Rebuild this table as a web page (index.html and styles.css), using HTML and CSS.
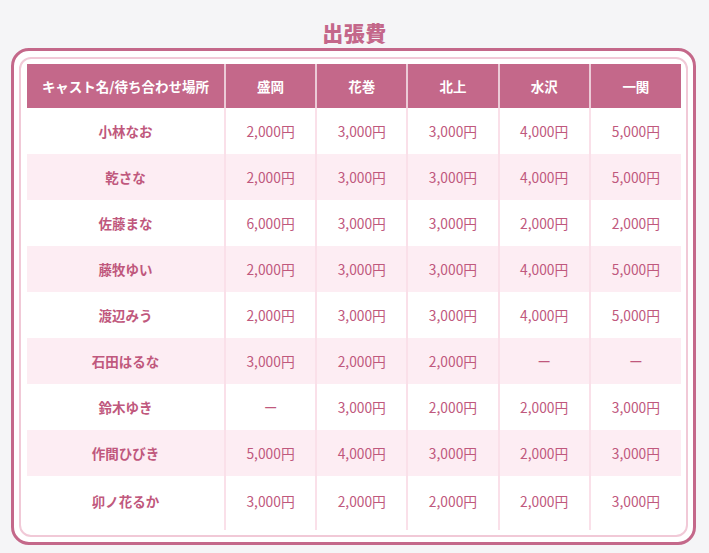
FILE: index.html
```html
<!DOCTYPE html>
<html lang="ja">
<head>
<meta charset="utf-8">
<title>出張費</title>
<link rel="stylesheet" href="styles.css">
</head>
<body>
<h1 class="title">出張費</h1>
<div class="frame">
  <div class="inner">
    <table class="fees">
      <colgroup>
        <col class="c-name"><col><col><col><col><col>
      </colgroup>
      <thead>
        <tr><th>キャスト名/待ち合わせ場所</th><th>盛岡</th><th>花巻</th><th>北上</th><th>水沢</th><th>一関</th></tr>
      </thead>
      <tbody>
        <tr><td class="name">小林なお</td><td>2,000円</td><td>3,000円</td><td>3,000円</td><td>4,000円</td><td>5,000円</td></tr>
        <tr><td class="name">乾さな</td><td>2,000円</td><td>3,000円</td><td>3,000円</td><td>4,000円</td><td>5,000円</td></tr>
        <tr><td class="name">佐藤まな</td><td>6,000円</td><td>3,000円</td><td>3,000円</td><td>2,000円</td><td>2,000円</td></tr>
        <tr><td class="name">藤牧ゆい</td><td>2,000円</td><td>3,000円</td><td>3,000円</td><td>4,000円</td><td>5,000円</td></tr>
        <tr><td class="name">渡辺みう</td><td>2,000円</td><td>3,000円</td><td>3,000円</td><td>4,000円</td><td>5,000円</td></tr>
        <tr><td class="name">石田はるな</td><td>3,000円</td><td>2,000円</td><td>2,000円</td><td>ー</td><td>ー</td></tr>
        <tr><td class="name">鈴木ゆき</td><td>ー</td><td>3,000円</td><td>2,000円</td><td>2,000円</td><td>3,000円</td></tr>
        <tr><td class="name">作間ひびき</td><td>5,000円</td><td>4,000円</td><td>3,000円</td><td>2,000円</td><td>3,000円</td></tr>
        <tr><td class="name">卯ノ花るか</td><td>3,000円</td><td>2,000円</td><td>2,000円</td><td>2,000円</td><td>3,000円</td></tr>
      </tbody>
    </table>
  </div>
</div>
</body>
</html>
```

FILE: styles.css
```css
html, body {
  margin: 0;
  padding: 0;
  background: #f5f5f7;
}
body {
  font-family: "Noto Sans CJK JP", "Noto Sans", sans-serif;
  color: #c0587d;
  width: 709px;
  height: 553px;
  overflow: hidden;
}
.title {
  margin: 0;
  padding-top: 18px;
  height: 30px;
  line-height: 28px;
  text-align: center;
  font-size: 21px;
  font-weight: 900;
  color: #c4678a;
  letter-spacing: 0.5px;
}
.frame {
  box-sizing: border-box;
  margin-left: 11px;
  width: 685px;
  height: 497px;
  border: 3px solid #c4688a;
  border-radius: 18px;
  background: #ffffff;
  padding: 6px 5px 5px 5px;
}
.inner {
  box-sizing: border-box;
  height: 100%;
  border: 2px solid #f1c9d7;
  border-radius: 12px;
  padding: 5px 5px 0 6px;
}
.fees {
  width: 654px;
  border-collapse: collapse;
  table-layout: fixed;
}
.c-name { width: 198px; }
.fees th {
  height: 44px;
  padding: 0;
  background: #c4688a;
  color: #ffffff;
  font-size: 13.5px;
  font-weight: 700;
  text-align: center;
  border-left: 2px solid #eccbd7;
}
.fees th:first-child { border-left: none; }
.fees td {
  height: 46px;
  padding: 0;
  text-align: center;
  font-size: 13.8px;
  font-weight: 400;
  border-left: 2px solid #fae0e9;
}
.fees td:first-child { border-left: none; }
.fees td.name { font-weight: 700; font-size: 13.5px; }
.fees tbody tr:nth-child(odd) { background: #ffffff; }
.fees tbody tr:nth-child(even) { background: #fdedf3; }
.fees tbody tr:last-child td { height: 50px; padding-bottom: 4px; }
```
